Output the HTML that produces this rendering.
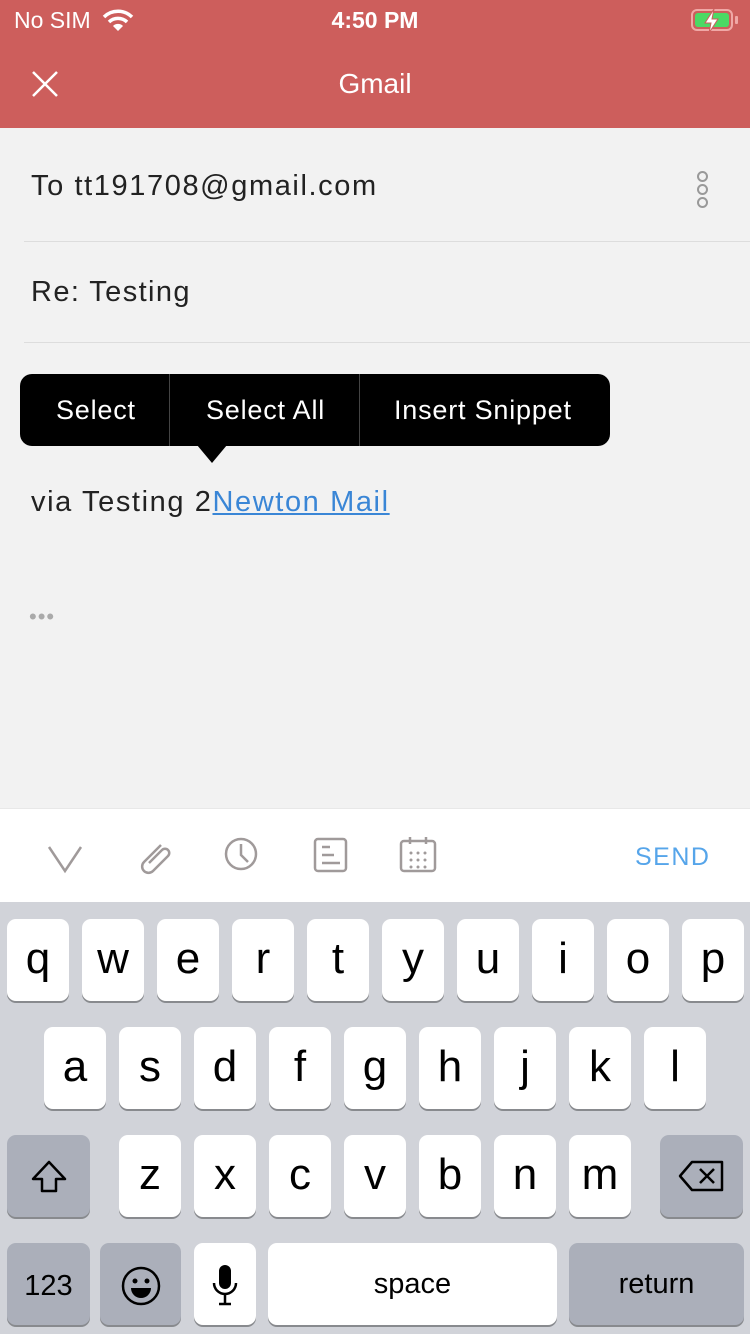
<!DOCTYPE html>
<html><head><meta charset="utf-8"><style>
*{margin:0;padding:0;box-sizing:border-box}
body{width:750px;height:1334px;overflow:hidden;background:#f2f2f2;font-family:"Liberation Sans",sans-serif;position:relative}
.abs{position:absolute}
.key{position:absolute;width:62px;height:82px;background:#fff;border-radius:9px;box-shadow:0 2px 0 #888a8e;font-size:44px;color:#000;text-align:center;line-height:80px}
.dk{background:#abafba}
</style></head><body>
<div class="abs" style="left:0;top:0;width:750px;height:128px;background:#cd5e5c"></div>
<div class="abs" style="left:14px;top:7px;color:#fff;font-size:23px">No SIM</div>
<svg class="abs" style="left:102px;top:8px" width="32" height="24" viewBox="0 0 32 24"><path d="M2 9a20 20 0 0 1 28 0" stroke="#fff" stroke-width="3.5" fill="none"/><path d="M7 14a13 13 0 0 1 18 0" stroke="#fff" stroke-width="3.5" fill="none"/><path d="M16 23l-5-5a7 7 0 0 1 10 0z" fill="#fff"/></svg>
<div class="abs" style="left:0;width:750px;top:7px;text-align:center;color:#fff;font-size:23px;font-weight:bold">4:50 PM</div>
<div class="abs" style="left:691px;top:9px;width:42px;height:22px;border:2px solid #f0a8a6;border-radius:6px;padding:2px"><div style="width:100%;height:100%;background:#4cd964;border-radius:3px"></div></div>
<div class="abs" style="left:735px;top:16px;width:3px;height:8px;background:#f0a8a6;border-radius:1px"></div>
<svg class="abs" style="left:700px;top:8px" width="24" height="26" viewBox="0 0 24 26"><path d="M14 1L5 15h6l-2 10 9-14h-6z" fill="#fff" stroke="#cd5e5c" stroke-width="1"/></svg>
<svg class="abs" style="left:32px;top:71px" width="26" height="26"><path d="M1 1L25 25M25 1L1 25" stroke="#fff" stroke-width="2.5"/></svg>
<div class="abs" style="left:0;width:750px;top:68px;text-align:center;color:#fff;font-size:28px">Gmail</div>
<div class="abs" style="left:31px;top:170px;font-size:29px;color:#222;letter-spacing:1.6px">To tt191708@gmail.com</div>
<div class="abs" style="left:697px;top:171px;width:11px;height:11px;border:2px solid #999;border-radius:50%"></div>
<div class="abs" style="left:697px;top:184px;width:11px;height:11px;border:2px solid #999;border-radius:50%"></div>
<div class="abs" style="left:697px;top:197px;width:11px;height:11px;border:2px solid #999;border-radius:50%"></div>
<div class="abs" style="left:24px;top:241px;width:726px;height:1px;background:#ddd"></div>
<div class="abs" style="left:31px;top:276px;font-size:29px;color:#222;letter-spacing:1.4px">Re: Testing</div>
<div class="abs" style="left:24px;top:342px;width:726px;height:1px;background:#ddd"></div>
<div class="abs" style="left:20px;top:374px;width:590px;height:72px;background:#000;border-radius:12px;color:#fff;font-size:27px;line-height:72px;letter-spacing:0.8px">
<span class="abs" style="left:36px">Select</span><span class="abs" style="left:149px;top:0;width:1px;height:72px;background:#444"></span>
<span class="abs" style="left:186px">Select All</span><span class="abs" style="left:339px;top:0;width:1px;height:72px;background:#444"></span>
<span class="abs" style="left:374px">Insert Snippet</span></div>
<div class="abs" style="left:197px;top:445px;width:0;height:0;border-left:15px solid transparent;border-right:15px solid transparent;border-top:18px solid #000"></div>
<div class="abs" style="left:31px;top:486px;font-size:29px;color:#222;letter-spacing:1.6px">via Testing 2<span style="color:#3a86d6;text-decoration:underline">Newton Mail</span></div>
<div class="abs" style="left:29px;top:604px;font-size:22px;color:#aaa;letter-spacing:1px">•••</div>
<div class="abs" style="left:0;top:808px;width:750px;height:94px;background:#fff;border-top:1px solid #e8e8e8"></div>
<svg class="abs" style="left:0;top:810px" width="750" height="92" viewBox="0 0 750 92"><g stroke="#a09a9a" stroke-width="2.5" fill="none">
<path d="M49 37l16 24 16-24"/>
<path d="M161 35l-17 17a6 6 0 0 0 9 9l15-15a4 4 0 0 0-6-6l-13 13"/>
<circle cx="241" cy="44" r="15"/><path d="M241 34v11l7 7"/>
<rect x="315" y="29" width="31" height="32" rx="3"/><path d="M322 37h8M322 45h12M322 53h18"/>
<rect x="401" y="31" width="34" height="30" rx="3"/><path d="M410 27v7M426 27v7"/>
</g><g fill="#a09a9a"><circle cx="411" cy="43" r="1.5"/><circle cx="418" cy="43" r="1.5"/><circle cx="425" cy="43" r="1.5"/><circle cx="411" cy="50" r="1.5"/><circle cx="418" cy="50" r="1.5"/><circle cx="425" cy="50" r="1.5"/><circle cx="411" cy="57" r="1.5"/><circle cx="418" cy="57" r="1.5"/><circle cx="425" cy="57" r="1.5"/></g></svg>
<div class="abs" style="left:635px;top:843px;font-size:25px;color:#56a5ea;letter-spacing:1.5px">SEND</div>
<div class="abs" style="left:0;top:902px;width:750px;height:432px;background:#d1d3d9"></div>
<div class="key" style="left:7px;top:919px">q</div><div class="key" style="left:82px;top:919px">w</div><div class="key" style="left:157px;top:919px">e</div><div class="key" style="left:232px;top:919px">r</div><div class="key" style="left:307px;top:919px">t</div><div class="key" style="left:382px;top:919px">y</div><div class="key" style="left:457px;top:919px">u</div><div class="key" style="left:532px;top:919px">i</div><div class="key" style="left:607px;top:919px">o</div><div class="key" style="left:682px;top:919px">p</div>
<div class="key" style="left:44px;top:1027px">a</div><div class="key" style="left:119px;top:1027px">s</div><div class="key" style="left:194px;top:1027px">d</div><div class="key" style="left:269px;top:1027px">f</div><div class="key" style="left:344px;top:1027px">g</div><div class="key" style="left:419px;top:1027px">h</div><div class="key" style="left:494px;top:1027px">j</div><div class="key" style="left:569px;top:1027px">k</div><div class="key" style="left:644px;top:1027px">l</div>
<div class="key dk" style="left:7px;top:1135px;width:83px"><svg width="40" height="36" style="margin-top:24px" viewBox="0 0 40 36"><path d="M20 3L4 20h9v12h14V20h9z" fill="none" stroke="#000" stroke-width="2.5" stroke-linejoin="round"/></svg></div>
<div class="key" style="left:119px;top:1135px">z</div><div class="key" style="left:194px;top:1135px">x</div><div class="key" style="left:269px;top:1135px">c</div><div class="key" style="left:344px;top:1135px">v</div><div class="key" style="left:419px;top:1135px">b</div><div class="key" style="left:494px;top:1135px">n</div><div class="key" style="left:569px;top:1135px">m</div>
<div class="key dk" style="left:660px;top:1135px;width:83px"><svg width="48" height="34" style="margin-top:24px" viewBox="0 0 48 34"><path d="M14 3h30v28H14L2 17z" fill="none" stroke="#000" stroke-width="2.5" stroke-linejoin="round"/><path d="M22 10l14 14M36 10L22 24" stroke="#000" stroke-width="2.5"/></svg></div>
<div class="key dk" style="left:7px;top:1243px;width:83px;font-size:29px;line-height:86px">123</div>
<div class="key dk" style="left:100px;top:1243px;width:81px"><svg width="42" height="42" style="margin-top:22px" viewBox="0 0 42 42"><circle cx="21" cy="21" r="18" fill="none" stroke="#000" stroke-width="2.5"/><circle cx="15" cy="16" r="2.5"/><circle cx="27" cy="16" r="2.5"/><path d="M11 23a10 10 0 0 0 20 0z"/></svg></div>
<div class="key" style="left:194px;top:1243px"><svg width="30" height="44" style="margin-top:20px" viewBox="0 0 30 44"><rect x="9" y="2" width="12" height="24" rx="6"/><path d="M4 20a11 11 0 0 0 22 0M15 31v9M9 41h12" fill="none" stroke="#000" stroke-width="2.5"/></svg></div>
<div class="key" style="left:268px;top:1243px;width:289px;font-size:29px;line-height:82px">space</div>
<div class="key dk" style="left:569px;top:1243px;width:175px;font-size:29px;line-height:82px">return</div>
</body></html>
